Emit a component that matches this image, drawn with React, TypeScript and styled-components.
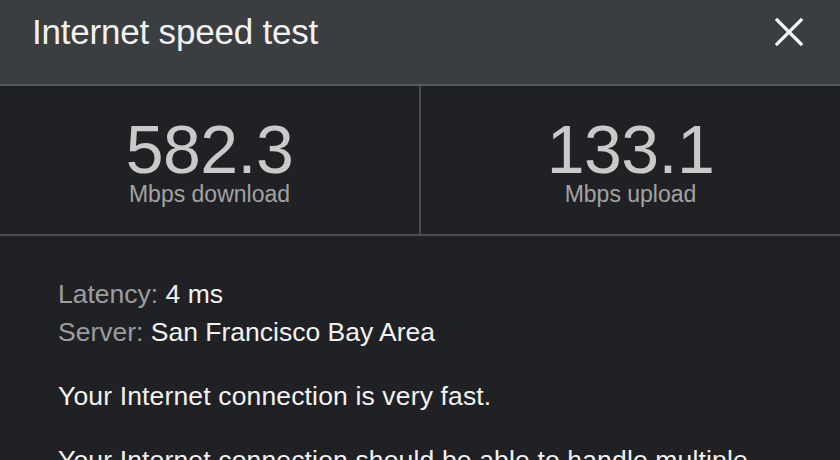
import React from "react";
import styled, { createGlobalStyle } from "styled-components";

const Global = createGlobalStyle`
  html, body { margin: 0; padding: 0; background: #202124; }
  body { font-family: "Liberation Sans", Arial, Helvetica, sans-serif; }
  * { box-sizing: border-box; }
`;

const Page = styled.div`
  width: 840px;
  height: 460px;
  overflow: hidden;
  background: #202124;
  display: flex;
  flex-direction: column;
`;

const Header = styled.header`
  height: 86px;
  flex: none;
  background: #3b3e41;
  border-bottom: 2px solid #56595c;
  display: flex;
  align-items: center;
  justify-content: space-between;
  padding: 0 36px 20px 32px;
`;

const Title = styled.h1`
  margin: 0;
  font-size: 35px;
  line-height: 40px;
  font-weight: 400;
  color: #f1f1f1;
  letter-spacing: -0.2px;
`;

const Close = styled.button`
  width: 30px;
  height: 30px;
  padding: 0;
  border: none;
  background: none;
  display: flex;
  align-items: center;
  justify-content: center;
  cursor: pointer;
`;

const Stats = styled.section`
  height: 150px;
  flex: none;
  display: grid;
  grid-template-columns: 1fr 2px 1fr;
  border-bottom: 2px solid #4b4e51;
`;

const Divider = styled.div`
  background: #4b4e51;
`;

const Stat = styled.div`
  display: flex;
  flex-direction: column;
  align-items: center;
  justify-content: center;
`;

const Value = styled.div`
  font-size: 68px;
  line-height: 68px;
  color: #c9c9ca;
  letter-spacing: -0.5px;
`;

const Label = styled.div`
  font-size: 23px;
  line-height: 22px;
  color: #a2a3a4;
`;

const Body = styled.section`
  padding: 39px 0 0 58px;
  display: flex;
  flex-direction: column;
  gap: 26px;
`;

const InfoList = styled.div`
  display: flex;
  flex-direction: column;
`;

const InfoRow = styled.div`
  font-size: 26.5px;
  line-height: 38px;
  color: #f2f2f2;
`;

const Key = styled.span`
  color: #9c9d9e;
`;

const Para = styled.p`
  margin: 0;
  font-size: 26.5px;
  line-height: 38px;
  color: #f2f2f2;
  white-space: nowrap;
  letter-spacing: 0.15px;
`;

export default function App() {
  return (
    <Page>
      <Global />
      <Header>
        <Title>Internet speed test</Title>
        <Close aria-label="Close">
          <svg width="28" height="28" viewBox="0 0 28 28">
            <path d="M2 2 L26 26 M26 2 L2 26" stroke="#f4f4f4" strokeWidth="3.2" strokeLinecap="square" />
          </svg>
        </Close>
      </Header>
      <Stats>
        <Stat>
          <Value>582.3</Value>
          <Label>Mbps download</Label>
        </Stat>
        <Divider />
        <Stat>
          <Value>133.1</Value>
          <Label>Mbps upload</Label>
        </Stat>
      </Stats>
      <Body>
        <InfoList>
          <InfoRow><Key>Latency:</Key> 4 ms</InfoRow>
          <InfoRow><Key>Server:</Key> San Francisco Bay Area</InfoRow>
        </InfoList>
        <Para>Your Internet connection is very fast.</Para>
        <Para>Your Internet connection should be able to handle multiple</Para>
      </Body>
    </Page>
  );
}
